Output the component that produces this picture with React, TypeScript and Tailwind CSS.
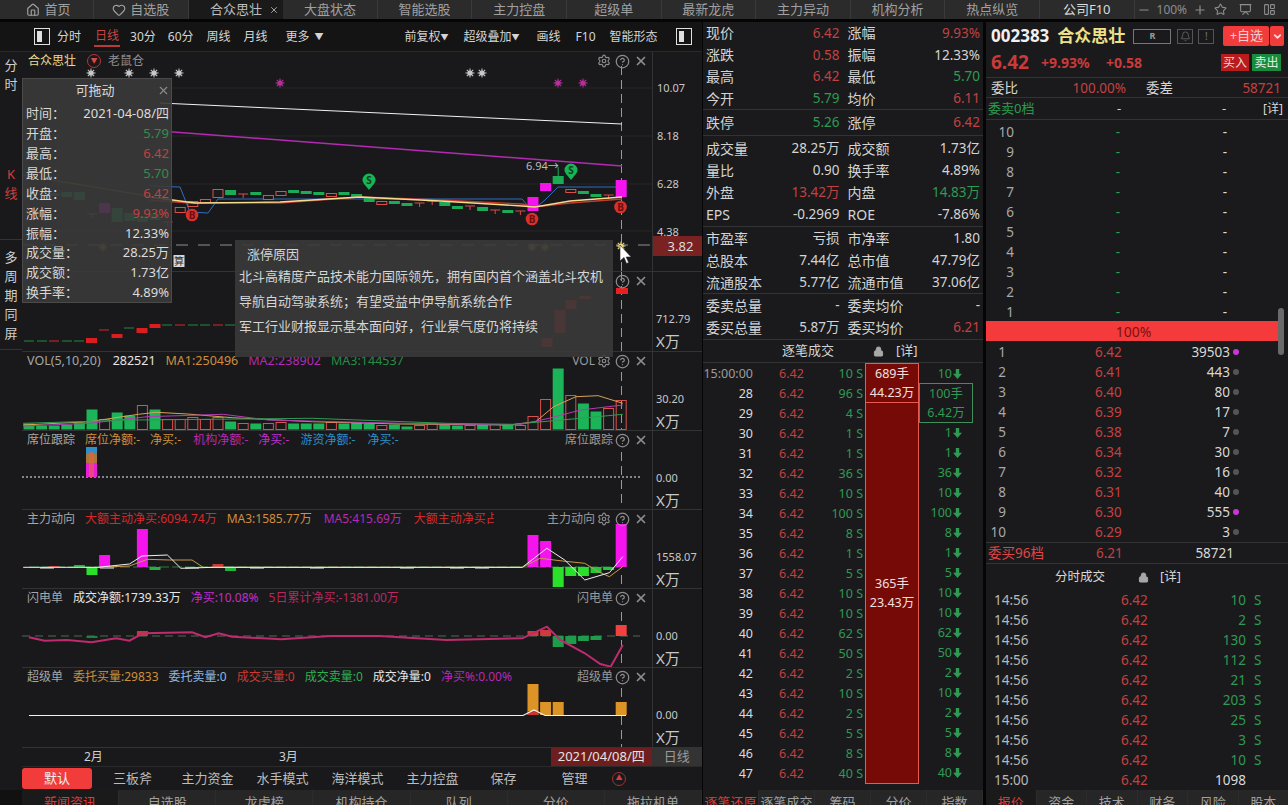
import { ReactNode } from "react";
import {
  ChevronDown,
  CircleHelp,
  Heart,
  Home,
  LayoutPanelLeft,
  Lock,
  Minus,
  Plus,
  Presentation,
  Settings,
  Star,
  X,
  Bell,
} from "lucide-react";

const RED = "text-[#c24141]";
const GREEN = "text-[#2e9a52]";
const CX = (i: number) => 29 + 12.6 * i;

// points read off the 2.24x / 3x crops, converted to page pixels
function line(points: number[][], yBase: number) {
  return points.map(([x, y]) => `${(x / 2.24).toFixed(1)},${(yBase + y / 3).toFixed(1)}`).join(" ");
}

const topTabs = ["自选股", "合众思壮", "大盘状态", "智能选股", "主力控盘", "超级单", "最新龙虎", "主力异动", "机构分析", "热点纵览", "公司F10"];

function TopBar() {
  return (
    <div className="flex h-[19px] items-center overflow-hidden bg-[#2b2b2b] text-[13px] text-[#a0a0a0]">
      <div className="flex h-full w-[94px] items-center justify-center gap-[4px] border-r border-[#3a3a3a] pl-[4px]">
        <Home size={14} />
        <span>首页</span>
      </div>
      {topTabs.map((t, i) => (
        <div
          key={t}
          className={
            i === 1
              ? "relative flex h-full w-[94.6px] items-center justify-center bg-[#1a1a1a] text-[#bdbdbd]"
              : i === 10
                ? "flex h-full w-[94.6px] items-center justify-center border-r border-[#3a3a3a] text-[#dcdcdc]"
                : "flex h-full w-[94.6px] items-center justify-center gap-[4px] border-r border-[#3a3a3a]"
          }
        >
          {i === 0 ? <Heart size={14} /> : null}
          <span>{t}</span>
          {i === 1 ? <X size={10} className="absolute right-[4px] top-[5px]" /> : null}
        </div>
      ))}
      <div className="flex flex-1 items-center gap-[6px] pl-[2px] text-[12px] text-[#8d8d8d]">
        <Minus size={14} />
        <span>100%</span>
        <Plus size={14} />
        <Star size={13} className="ml-[1px]" />
        <Presentation size={13} className="ml-[6px]" />
        <LayoutPanelLeft size={13} className="ml-[5px]" />
      </div>
    </div>
  );
}

function SplitIcon() {
  return (
    <div className="flex h-[17px] w-[16px] shrink-0 border border-[#e0e0e0] p-[2px]">
      <div className="w-[5px] bg-[#e0e0e0]" />
    </div>
  );
}

function Toolbar() {
  return (
    <div className="flex h-[30px] items-center whitespace-nowrap border-b border-[#2a2a2a] bg-[#141414] pl-[34px] text-[12px] text-[#d4d4d4]">
      <SplitIcon />
      <span className="ml-[7px]">分时</span>
      <span className="ml-[13px] border-b-2 border-[#b93a3a] px-px text-[#c94545]">日线</span>
      <span className="ml-[10px]">30分</span>
      <span className="ml-[12px]">60分</span>
      <span className="ml-[13px]">周线</span>
      <span className="ml-[13px]">月线</span>
      <span className="ml-[18px]">更多</span>
      <span className="ml-[5px] text-[9px]">▼</span>
      <span className="ml-[81px]">前复权</span>
      <span className="text-[8px]">▼</span>
      <span className="ml-[15px]">超级叠加</span>
      <span className="text-[8px]">▼</span>
      <span className="ml-[17px]">画线</span>
      <span className="ml-[15px]">F10</span>
      <span className="ml-[14px]">智能形态</span>
      <div className="ml-[18px]">
        <SplitIcon />
      </div>
    </div>
  );
}

function SideRail() {
  return (
    <div className="flex w-[22px] flex-col text-center text-[13px] leading-[19px] text-[#cfcfcf]">
      <div className="flex h-[73px] flex-col pt-[4px]">
        <span>分</span>
        <span>时</span>
      </div>
      <div className="flex h-[115px] flex-col border-b border-[#333] pt-[40px] text-[#cf3f3f]">
        <span>K</span>
        <span>线</span>
      </div>
      <div className="flex h-[110px] flex-col border-b border-[#333] pt-[8px]">
        <span>多</span>
        <span>周</span>
        <span>期</span>
        <span>同</span>
        <span>屏</span>
      </div>
    </div>
  );
}

function Burst({ x, y, color }: { x: number; y: number; color: string }) {
  const rays = [0, 45, 90, 135];
  return (
    <g>
      <circle cx={x} cy={y} r={2.6} fill={color} />
      {rays.map((r) => (
        <line key={r} x1={x - 4.5} y1={y} x2={x + 4.5} y2={y} stroke={color} strokeWidth={1} transform={`rotate(${r} ${x} ${y})`} />
      ))}
    </g>
  );
}

// [index, top, bottom, kind]: r hollow red, g green, m magenta, c cross
const candles: [number, number, number, string][] = [
  [2, 193, 196, "g"], [3, 192, 197, "g"], [4, 192, 200, "g"], [5, 214, 218, "c"], [6, 203, 213, "m"],
  [7, 208, 222, "g"], [8, 213, 221, "g"], [9, 216, 222, "g"], [10, 214, 220, "g"], [11, 222, 224, "c"],
  [12, 207, 212, "r"], [13, 201, 206, "r"], [14, 199, 202, "r"], [15, 189, 197, "r"], [16, 190, 195, "g"],
  [17, 194, 194, "c"], [18, 192, 195, "g"], [19, 195, 199, "r"], [20, 191, 195, "r"], [21, 190, 193, "g"],
  [22, 191, 194, "g"], [23, 192, 195, "g"], [24, 193, 196, "r"], [25, 192, 195, "g"], [26, 194, 197, "g"],
  [27, 197, 202, "g"], [28, 201, 204, "r"], [29, 201, 204, "g"], [30, 203, 206, "g"], [31, 203, 203, "c"],
  [32, 201, 201, "c"], [33, 202, 206, "g"], [34, 206, 209, "g"], [35, 206, 206, "c"], [36, 207, 211, "g"],
  [37, 210, 210, "c"], [38, 210, 213, "g"], [39, 211, 211, "c"], [40, 197, 211, "m"], [41, 183, 191, "m"],
  [42, 176, 184, "g"], [43, 189, 192, "r"], [44, 191, 194, "g"], [45, 194, 197, "g"], [46, 195, 195, "c"],
  [47, 180, 197, "m"],
];

function Candle({ c }: { c: [number, number, number, string] }) {
  const [i, top, bot, kind] = c;
  const x = CX(i);
  if (kind === "c") {
    return (
      <g stroke="#d8504a">
        <line x1={x - 5} x2={x + 5} y1={top} y2={top} />
        <line x1={x} x2={x} y1={top} y2={top + 4} />
      </g>
    );
  }
  if (kind === "r") {
    return <rect x={x - 5} y={top + 0.5} width={10} height={bot - top} fill="#191a1c" stroke="#dc4f48" />;
  }
  return <rect x={x - 5.5} y={top} width={11} height={bot - top} fill={kind === "m" ? "#f614ee" : "#1bab57"} />;
}

function Sign({ x, y, letter }: { x: number; y: number; letter: string }) {
  const green = letter === "S";
  return (
    <g>
      {green ? (
        <path d={`M${x - 6.5} ${y}a6.5 6.5 0 0 1 13 0c0 3-3.5 6-6.5 10c-3-4-6.5-7-6.5-10z`} fill="#18b455" />
      ) : (
        <circle cx={x} cy={y} r={6.3} fill="#d8302c" />
      )}
      <text x={x} y={y + 3.5} textAnchor="middle" fontSize={10} fontWeight={700} fill={green ? "#0d3d20" : "#6e0d0d"}>
        {letter}
      </text>
    </g>
  );
}

function CursorLine({ top, bottom }: { top: number; bottom: number }) {
  return <line x1={621.5} x2={621.5} y1={top} y2={bottom} stroke="#9a9a9a" strokeDasharray="9 5" />;
}

function KChart() {
  return (
    <svg className="absolute inset-0 h-full w-full" viewBox="22 52 630 219">
      <g stroke="#272727">
        <line x1={22} x2={652} y1={88} y2={88} />
        <line x1={22} x2={652} y1={136} y2={136} />
        <line x1={22} x2={652} y1={184} y2={184} />
        <line x1={22} x2={652} y1={231} y2={231} />
      </g>
      <line x1={22} x2={652} y1={245} y2={245} stroke="#8f8f8f" strokeDasharray="12 10" />
      <CursorLine top={66} bottom={272} />
      {[91, 129, 154, 179, 470, 482].map((x) => (
        <Burst key={x} x={x} y={73} color="#c8c8c8" />
      ))}
      {[280, 558, 583].map((x) => (
        <Burst key={x} x={x} y={83} color="#b92f9c" />
      ))}
      {[103, 532, 545].map((x) => (
        <Burst key={x} x={x} y={247} color="#a5813a" />
      ))}
      <polyline points="160,103 622,124" fill="none" stroke="#f2f2f2" />
      <polyline points="160,131 622,166" fill="none" stroke="#b42ab4" strokeWidth={1.5} />
      <polyline points="22,175 172,200" fill="none" stroke="#a8702a" />
      <polyline
        points="150,186 180,187 190,212 208,213 218,199 522,199 532,211 545,200 558,187 622,187"
        fill="none"
        stroke="#2f6fc4"
      />
      {candles.map((c) => (
        <Candle key={c[0]} c={c} />
      ))}
      <line x1={CX(42)} x2={CX(42)} y1={167} y2={176} stroke="#1bab57" />
      <polyline
        points="150,200 190,203 280,203 360,197 440,200 522,204 535,207 570,203 622,199"
        fill="none"
        stroke="#c43a30"
        strokeWidth={1.3}
      />
      <polyline
        points="150,197 195,203 280,202 360,197 440,201 522,206 535,207 570,201 622,197"
        fill="none"
        stroke="#f3dd8c"
        strokeWidth={1.3}
      />
      <Sign x={192} y={215} letter="B" />
      <Sign x={532} y={219} letter="B" />
      <Sign x={620.5} y={207} letter="B" />
      <Sign x={369} y={180} letter="S" />
      <Sign x={571} y={170} letter="S" />
      <text x={526} y={170} fontSize={11} fill="#bdbdbd">
        6.94→
      </text>
      <rect x={173.5} y={255} width={11} height={12} fill="#d8d8d8" />
      <text x={179} y={265} textAnchor="middle" fontSize={10} fill="#333">
        算
      </text>
      <Burst x={621} y={246} color="#ecd97a" />
      <path d="M620 245v16l4-3.5 2.5 6 2.2-1-2.5-5.5h5z" fill="#fff" stroke="#222" strokeWidth={0.6} />
    </svg>
  );
}

function SecondChart() {
  const reds = [
    [91.5, 338, 343], [117, 334, 338], [142, 328, 333], [155, 324, 328], [547, 338, 347],
    [560, 310, 333], [571, 300, 309], [585, 296, 299],
  ];
  const dashes = [29, 42, 54, 67, 79, 104, 129, 167, 180, 193, 205, 218, 230];
  return (
    <svg className="absolute inset-0 h-full w-full" viewBox="22 272 630 79">
      <CursorLine top={272} bottom={352} />
      {dashes.map((x, i) => (
        <line
          key={x}
          x1={x - 5}
          x2={x + 5}
          y1={x < 90 ? 341 : x < 160 ? 340 - i * 2 : 325}
          y2={x < 90 ? 341 : x < 160 ? 340 - i * 2 : 325}
          stroke={i % 3 === 2 ? "#cf2a2a" : "#1d8a44"}
        />
      ))}
      {reds.map(([x, a, b]) => (
        <rect key={x} x={x - 5.5} y={a} width={11} height={b - a} fill="#d81e1e" />
      ))}
      <rect x={616} y={288} width={12} height={6} fill="#e8201f" />
    </svg>
  );
}

const vols: [number, string][] = [
  [6, "g"], [4, "g"], [4, "g"], [5, "g"], [7, "g"], [20, "g"], [10, "r"], [17, "g"], [14, "g"], [24, "r"],
  [20, "g"], [10, "r"], [10, "r"], [12, "r"], [10, "r"], [12, "r"], [8, "g"], [6, "r"], [6, "g"], [6, "r"],
  [7, "r"], [6, "g"], [6, "g"], [6, "g"], [7, "r"], [6, "g"], [7, "g"], [6, "g"], [4, "r"], [5, "g"],
  [3, "g"], [4, "r"], [6, "r"], [5, "g"], [4, "g"], [4, "r"], [5, "g"], [5, "r"], [5, "g"], [4, "r"],
  [13, "r"], [30, "r"], [61, "g"], [34, "r"], [26, "g"], [18, "g"], [21, "r"], [29, "r"],
];

function VolChart() {
  return (
    <svg className="absolute inset-0 h-full w-full" viewBox="22 352 630 78">
      <CursorLine top={372} bottom={431} />
      {vols.map(([h, k], i) =>
        k === "g" ? (
          <rect key={i} x={CX(i) - 5.5} y={429.5 - h} width={11} height={h} fill="#1bb458" />
        ) : (
          <rect key={i} x={CX(i) - 5} y={429.5 - h} width={10} height={h} fill="none" stroke="#d9504c" />
        ),
      )}
      <polyline
        points={line([[52, 585], [200, 575], [310, 553], [350, 547], [420, 552], [520, 563], [700, 575], [900, 582], [1140, 585], [1200, 575], [1240, 530], [1290, 500], [1340, 497], [1395, 520]], 230)}
        fill="none"
        stroke="#d6a354"
      />
      <polyline
        points={line([[52, 588], [200, 580], [330, 560], [500, 553], [600, 570], [900, 580], [1160, 585], [1230, 565], [1300, 540], [1395, 525]], 230)}
        fill="none"
        stroke="#b53ab5"
      />
      <polyline
        points={line([[52, 580], [300, 570], [700, 565], [1000, 580], [1150, 583], [1300, 565], [1395, 553]], 230)}
        fill="none"
        stroke="#2f9c50"
      />
    </svg>
  );
}

function SeatChart() {
  return (
    <svg className="absolute inset-0 h-full w-full" viewBox="22 431 630 78">
      <CursorLine top={452} bottom={505} />
      <line x1={22} x2={640} y1={477} y2={477} stroke="#f2f2f2" strokeDasharray="2 2" />
      <rect x={86} y={447} width={11} height={7} fill="#2f8fc8" />
      <rect x={86} y={454} width={11} height={9} fill="#a9773b" />
      <rect x={86} y={463} width={11} height={14} fill="#e81fd8" />
      <rect x={89} y={452} width={5} height={25} fill="#f0603a" opacity={0.6} />
    </svg>
  );
}

function MainForceChart() {
  const bars: [number, number, number, string][] = [
    [6, 555, 567, "#f614ee"], [9, 529, 567, "#f614ee"], [40, 535, 567, "#f614ee"], [41, 541, 567, "#f614ee"], [47, 524, 567, "#f614ee"],
    [5, 567, 575, "#2ae02a"], [10, 567, 570, "#22b13e"], [16, 567, 571, "#22b13e"],
    [42, 567, 587, "#2ae02a"], [43, 567, 576, "#2ae02a"], [44, 567, 576, "#2ae02a"], [45, 567, 573, "#22c83a"], [46, 567, 570, "#22c83a"],
    [4, 565, 567, "#22b13e"], [15, 564, 567, "#c93a32"], [2, 566, 567, "#c93a32"],
  ];
  return (
    <svg className="absolute inset-0 h-full w-full" viewBox="22 510 630 78">
      <CursorLine top={575} bottom={589} />
      <line x1={29} x2={622} y1={567} y2={567} stroke="#26803c" strokeDasharray="10 3" />
      {[40, 100, 185, 250, 310, 400, 450, 475].map((x) => (
        <line key={x} x1={x} x2={x + 14} y1={568} y2={568} stroke="#eee" />
      ))}
      {bars.map(([i, a, b, color]) => (
        <rect key={`${i}${a}`} x={CX(i) - 5.5} y={a} width={11} height={b - a} fill={color} />
      ))}
      <polyline
        points={line([[220, 172], [290, 168], [330, 148], [380, 150], [430, 150], [455, 172], [1170, 172], [1210, 145], [1260, 153], [1310, 160], [1340, 185], [1365, 200], [1395, 170]], 510)}
        fill="none"
        stroke="#c69a4a"
      />
      <polyline
        points={line([[52, 172], [220, 172], [290, 162], [318, 138], [375, 135], [405, 175], [480, 172], [1170, 172], [1225, 115], [1265, 150], [1310, 210], [1365, 188], [1395, 140]], 510)}
        fill="none"
        stroke="#f0f0f0"
      />
    </svg>
  );
}

function LightningChart() {
  const bars: [number, number, number, string][] = [
    [9, 631, 636, "#c23a38"], [40, 631, 636, "#cf3b3a"], [41, 630, 636, "#cf3b3a"], [47, 625, 636, "#f24141"],
    [5, 636, 638, "#237f3d"], [42, 636, 647, "#1f9b4c"], [43, 636, 644, "#1f9b4c"], [44, 636, 641, "#1f9b4c"], [45, 636, 640, "#1f9b4c"],
  ];
  return (
    <svg className="absolute inset-0 h-full w-full" viewBox="22 589 630 78">
      <CursorLine top={612} bottom={668} />
      <line x1={22} x2={640} y1={636} y2={636} stroke="#4f6a54" strokeDasharray="8 5" />
      {bars.map(([i, a, b, color]) => (
        <rect key={`${i}`} x={CX(i) - 5.5} y={a} width={11} height={b - a} fill={color} />
      ))}
      <polyline
        points={line([[65, 382], [100, 392], [150, 390], [205, 397], [260, 385], [290, 392], [320, 370], [430, 367], [460, 382], [490, 370], [520, 380], [630, 388], [740, 378], [850, 378], [1000, 390], [1170, 385], [1225, 350], [1255, 390], [1310, 430], [1345, 462], [1368, 470], [1395, 405]], 510)}
        fill="none"
        stroke="#c02a6e"
        strokeWidth={2}
      />
    </svg>
  );
}

function SuperChart() {
  return (
    <svg className="absolute inset-0 h-full w-full" viewBox="22 668 630 79">
      <CursorLine top={688} bottom={748} />
      {[[40, 684], [41, 702], [42, 702], [47, 702]].map(([i, top]) => (
        <rect key={i} x={CX(i) - 5.5} y={top} width={11} height={715 - top} fill="#dd9427" />
      ))}
      <rect x={CX(40) - 5} y={711} width={10} height={4} fill="#c8362e" />
      <polyline points="29,715.5 523,715.5 534,710 545,715.5 626,715.5" fill="none" stroke="#f2f2f2" strokeWidth={1.2} />
    </svg>
  );
}

function PanelIcons({ gear = true }: { gear?: boolean }) {
  return (
    <div className="flex items-center gap-[4px] text-[#8c8c8c]">
      {gear ? <Settings size={14} /> : null}
      <CircleHelp size={15} />
      <X size={14} strokeWidth={3} />
    </div>
  );
}

function Panel({
  height,
  chart,
  labels,
  right,
  gear = true,
  value,
}: {
  height: string;
  chart: ReactNode;
  labels?: ReactNode;
  right?: string;
  gear?: boolean;
  value: string;
}) {
  return (
    <div className={`flex ${height} border-b border-[#333]`}>
      <div className="relative flex-1 overflow-hidden">
        {chart}
        <div className="relative flex h-[18px] items-center justify-between pl-[5px] pr-[4px] text-[12px] whitespace-nowrap">
          <div className="flex w-[490px] gap-[10px] overflow-hidden">{labels}</div>
          <div className="flex items-center gap-[2px] text-[#9a9a9a]">
            <span>{right}</span>
            <PanelIcons gear={gear} />
          </div>
        </div>
      </div>
      <div className="flex w-[50px] flex-col border-l border-[#333] pl-[3px] pt-[39px] text-[#c8c8c8]">
        <span className="text-[11px] leading-4">{value}</span>
        <span className="mt-[4px] text-[15px] leading-5">X万</span>
      </div>
    </div>
  );
}

function KPanel() {
  return (
    <div className="flex h-[220px] border-b border-[#333]">
      <div className="relative flex-1 overflow-hidden">
        <KChart />
        <div className="relative flex h-[18px] items-center justify-between pl-[6px] pr-[4px] text-[12px]">
          <div className="flex items-center">
            <span className="text-[#ecdc8c]">合众思壮</span>
            <span className="ml-[11px] flex h-[14px] w-[14px] items-center justify-center rounded-full border border-[#b43a3a] text-[7px] text-[#d24a4a]">▼</span>
            <span className="ml-[7px] text-[#8f8f8f]">老鼠仓</span>
          </div>
          <PanelIcons />
        </div>
      </div>
      <div className="relative flex w-[50px] flex-col border-l border-[#333] pl-[4px] pt-[28px] text-[11px] leading-[48px] text-[#c8c8c8]">
        <span className="h-[48px] leading-4">10.07</span>
        <span className="h-[48px] leading-4">8.18</span>
        <span className="h-[48px] leading-4">6.28</span>
        <span className="h-[16px] leading-4">4.38</span>
        <div className="absolute left-0 top-[184px] flex h-[20px] w-full items-center justify-center bg-[#7a2222] pl-[6px] text-[13px] text-[#dcdcdc]">3.82</div>
      </div>
    </div>
  );
}

const popRows: [string, string, string][] = [
  ["时间：", "2021-04-08/四", "text-[#dcdcdc]"],
  ["开盘：", "5.79", "text-[#2f8f4e]"],
  ["最高：", "6.42", "text-[#c24141]"],
  ["最低：", "5.70", "text-[#2f8f4e]"],
  ["收盘：", "6.42", "text-[#c24141]"],
  ["涨幅：", "9.93%", "text-[#c24141]"],
  ["振幅：", "12.33%", "text-[#dcdcdc]"],
  ["成交量：", "28.25万", "text-[#dcdcdc]"],
  ["成交额：", "1.73亿", "text-[#dcdcdc]"],
  ["换手率：", "4.89%", "text-[#dcdcdc]"],
];

function DragPopup() {
  return (
    <div className="absolute left-0 top-[26px] h-[225px] w-[150px] border border-[#4a4a4a] bg-[#3a3a3a]/90 text-[13px] text-[#d8d8d8]">
      <div className="relative flex h-[24px] items-center justify-center pr-[4px]">
        <span>可拖动</span>
        <X size={13} className="absolute right-[1px] top-[5px] text-[#8c8c8c]" />
      </div>
      <div className="flex flex-col pl-[3px] pr-[2px] pt-[1px]">
        {popRows.map(([k, v, c]) => (
          <div key={k} className="flex h-[19.9px] items-center justify-between">
            <span>{k}</span>
            <span className={c}>{v}</span>
          </div>
        ))}
      </div>
    </div>
  );
}

function ReasonTip() {
  return (
    <div className="absolute left-[213px] top-[188px] h-[117px] w-[378px] bg-[#3a3a3a]/90 pl-[4px] text-[13px] text-[#d6d6d6]">
      <div className="pl-[8px] pt-[5px] leading-[18px]">涨停原因</div>
      <div className="mt-[1px] whitespace-nowrap leading-[25px]">北斗高精度产品技术能力国际领先，拥有国内首个涵盖北斗农机</div>
      <div className="whitespace-nowrap leading-[25px]">导航自动驾驶系统；有望受益中伊导航系统合作</div>
      <div className="whitespace-nowrap leading-[25px]">军工行业财报显示基本面向好，行业景气度仍将持续</div>
    </div>
  );
}

function ChartColumn() {
  return (
    <div className="flex w-[680px] flex-col">
      <div className="relative">
        <KPanel />
        <Panel height="h-[80px]" chart={<SecondChart />} gear={false} value="712.79" />
        <Panel
          height="h-[79px]"
          chart={<VolChart />}
          right="VOL"
          value="30.20"
          labels={
            <>
              <span className="text-[12.5px] text-[#a6a6a6]">VOL(5,10,20)</span>
              <span className="ml-[2px] text-[12.5px] text-[#e6e6e6]">282521</span>
              <span className="text-[12.5px] text-[#cf8f3c]">MA1:250496</span>
              <span className="text-[12.5px] text-[#b42ab4]">MA2:238902</span>
              <span className="text-[12.5px] text-[#228f45]">MA3:144537</span>
            </>
          }
        />
        <Panel
          height="h-[79px]"
          chart={<SeatChart />}
          right="席位跟踪"
          gear={false}
          value="0.00"
          labels={
            <>
              <span className="text-[#a6a6a6]">席位跟踪</span>
              <span className="text-[#cf8f3c]">席位净额:-</span>
              <span className="text-[#cf8f3c]">净买:-</span>
              <span className="ml-[2px] text-[#b42ab4]">机构净额:-</span>
              <span className="text-[#c02ed0]">净买:-</span>
              <span className="ml-[1px] text-[#2f8fc8]">游资净额:-</span>
              <span className="ml-[2px] text-[#2f8fc8]">净买:-</span>
            </>
          }
        />
        <Panel
          height="h-[79px]"
          chart={<MainForceChart />}
          right="主力动向"
          value="1558.07"
          labels={
            <>
              <span className="text-[#a6a6a6]">主力动向</span>
              <span className="text-[#d62a2a]">大额主动净买:6094.74万</span>
              <span className="text-[#cf8f3c]">MA3:1585.77万</span>
              <span className="ml-[2px] text-[#b42ab4]">MA5:415.69万</span>
              <span className="ml-[2px] w-[80px] shrink-0 overflow-hidden text-[#d62a2a]">大额主动净买占比</span>
            </>
          }
        />
        <Panel
          height="h-[79px]"
          chart={<LightningChart />}
          right="闪电单"
          gear={false}
          value="0.00"
          labels={
            <>
              <span className="text-[#a6a6a6]">闪电单</span>
              <span className="text-[#e6e6e6]">成交净额:1739.33万</span>
              <span className="text-[#c02ed0]">净买:10.08%</span>
              <span className="text-[#b82a5c]">5日累计净买:-1381.00万</span>
            </>
          }
        />
        <Panel
          height="h-[80px]"
          chart={<SuperChart />}
          right="超级单"
          gear={false}
          value="0.00"
          labels={
            <>
              <span className="text-[#a6a6a6]">超级单</span>
              <span className="text-[#cf8f3c]">委托买量:29833</span>
              <span className="text-[#8fb8e0]">委托卖量:0</span>
              <span className="text-[#c93a32]">成交买量:0</span>
              <span className="text-[#2fae52]">成交卖量:0</span>
              <span className="text-[#e6e6e6]">成交净量:0</span>
              <span className="text-[#b42ab4]">净买%:0.00%</span>
            </>
          }
        />
        <DragPopup />
        <ReasonTip />
      </div>
      <div className="flex h-[18px] items-center text-[12px] text-[#d0d0d0]">
        <span className="ml-[62px]">2月</span>
        <span className="ml-[176px]">3月</span>
        <div className="ml-[253px] flex h-full w-[101px] items-center justify-center bg-[#6e1e1e] text-[13px] text-[#e4e4e4]">2021/04/08/四</div>
        <div className="flex h-full flex-1 items-center justify-center bg-[#333] text-[13px] text-[#9a9a9a]">日线</div>
      </div>
      <div className="flex h-[24px] items-center border-t border-[#2a2a2a] text-[13px] text-[#bcbcbc]">
        <div className="flex h-[21px] w-[70px] items-center justify-center rounded-[3px] bg-[#f23c3c] text-[#f0f0f0]">默认</div>
        <span className="ml-[3px] flex w-[75px] justify-center">三板斧</span>
        <span className="flex w-[75px] justify-center">主力资金</span>
        <span className="flex w-[75px] justify-center">水手模式</span>
        <span className="flex w-[75px] justify-center">海洋模式</span>
        <span className="flex w-[75px] justify-center">主力控盘</span>
        <span className="flex w-[67px] justify-center">保存</span>
        <span className="flex w-[75px] justify-center">管理</span>
        <span className="flex h-[14px] w-[14px] items-center justify-center rounded-full border border-[#a03434] text-[7px] text-[#d04040]">▲</span>
      </div>
    </div>
  );
}

const quoteGroups: { h: string; rows: [string, string, string, string, string, string][] }[] = [
  {
    h: "h-[88px]",
    rows: [
      ["现价", "6.42", RED, "涨幅", "9.93%", RED],
      ["涨跌", "0.58", RED, "振幅", "12.33%", ""],
      ["最高", "6.42", RED, "最低", "5.70", GREEN],
      ["今开", "5.79", GREEN, "均价", "6.11", RED],
    ],
  },
  { h: "h-[26px]", rows: [["跌停", "5.26", GREEN, "涨停", "6.42", RED]] },
  {
    h: "h-[91px]",
    rows: [
      ["成交量", "28.25万", "", "成交额", "1.73亿", ""],
      ["量比", "0.90", "", "换手率", "4.89%", ""],
      ["外盘", "13.42万", RED, "内盘", "14.83万", GREEN],
      ["EPS", "-0.2969", "", "ROE", "-7.86%", ""],
    ],
  },
  {
    h: "h-[67px]",
    rows: [
      ["市盈率", "亏损", "", "市净率", "1.80", ""],
      ["总股本", "7.44亿", "", "总市值", "47.79亿", ""],
      ["流通股本", "5.77亿", "", "流通市值", "37.06亿", ""],
    ],
  },
  {
    h: "h-[46px]",
    rows: [
      ["委卖总量", "-", "", "委卖均价", "-", ""],
      ["委买总量", "5.87万", "", "委买均价", "6.21", RED],
    ],
  },
];

const tickVols = ["10", "96", "4", "1", "1", "36", "10", "100", "8", "1", "5", "10", "10", "62", "50", "2", "10", "2", "5", "8", "40"];

function BottomTabs({ tabs, width }: { tabs: string[]; width: string }) {
  return (
    <div className="flex h-[15px] overflow-hidden bg-[#111] text-[13px] text-[#a0a0a0]">
      {tabs.map((t, i) => (
        <div
          key={t}
          className={`${width} flex justify-center border-r border-[#2c2c2c] pt-[3px] leading-[18px] ${i === 0 ? "bg-[#1a1a1a] text-[#d93c3c]" : "bg-[#262626]"}`}
        >
          {t}
        </div>
      ))}
    </div>
  );
}

function DownArrow() {
  return (
    <svg width="9" height="10" viewBox="0 0 9 10" className="ml-px">
      <path d="M2.8 0h3.4v4.8H9L4.5 10 0 4.8h2.8z" fill="#2e9a52" />
    </svg>
  );
}

function QuoteColumn() {
  return (
    <div className="flex w-[282px] flex-col border-x border-[#050505] text-[#d4d4d4]">
      {quoteGroups.map((g) => (
        <div key={g.h} className={`flex ${g.h} flex-col justify-center border-b border-[#333] px-[3px]`}>
          {g.rows.map(([a, b, bc, c, d, dc]) => (
            <div key={a} className="flex h-[22px] items-center text-[14px]">
              <span className="w-[66px]">{a}</span>
              <span className={`w-[69px] text-right text-[13.5px] ${bc}`}>{b}</span>
              <span className="ml-[8px] w-[68px]">{c}</span>
              <span className={`w-[66px] text-right text-[13.5px] ${dc}`}>{d}</span>
            </div>
          ))}
        </div>
      ))}
      <div className="flex h-[23px] items-center border-b border-[#333] text-[13px]">
        <span className="ml-[79px]">逐笔成交</span>
        <Lock size={11} fill="#a8a8a8" className="ml-[39px] text-[#a8a8a8]" />
        <span className="ml-[12px]">[详]</span>
      </div>
      <div className="flex h-[421px] text-[12.5px] leading-[20px]">
        <div className="flex w-[162px] flex-col pt-[1px]">
          {tickVols.map((v, i) => (
            <div key={i} className="flex h-[20px]">
              <span className={`w-[50px] text-right ${i === 0 ? "text-[#9c9c9c]" : "text-[#dcdcdc]"}`}>{i === 0 ? "15:00:00" : 27 + i}</span>
              <span className={`ml-[26px] w-[26px] ${RED}`}>6.42</span>
              <span className={`w-[58px] text-right ${GREEN}`}>{v} S</span>
            </div>
          ))}
        </div>
        <div className="flex w-[54px] flex-col border border-[#e65a50] bg-[#760a06] text-center leading-[19px] text-[#f0e0e0]">
          <div className="flex h-[39px] flex-col justify-center border-b border-[#e65a50]">
            <span>689手</span>
            <span>44.23万</span>
          </div>
          <div className="flex flex-1 flex-col justify-center">
            <span>365手</span>
            <span>23.43万</span>
          </div>
        </div>
        <div className={`flex flex-1 flex-col pt-[1px] ${GREEN}`}>
          <div className="flex h-[19px] items-center justify-end pr-[21px]">
            10
            <DownArrow />
          </div>
          <div className="flex h-[40px] w-[54px] flex-col items-center justify-center border border-[#3f8f5a] leading-[19px]">
            <span>100手</span>
            <span>6.42万</span>
          </div>
          {tickVols.slice(3).map((v, i) => (
            <div key={i} className="flex h-[20px] items-center justify-end pr-[21px]">
              {v}
              <DownArrow />
            </div>
          ))}
        </div>
      </div>
      <div className="mt-auto">
        <BottomTabs tabs={["逐笔还原", "逐笔成交", "筹码", "分价", "指数"]} width="w-[56px]" />
      </div>
    </div>
  );
}

const bids: [string, string, string][] = [
  ["6.42", "39503", "#c936d8"], ["6.41", "443", "#555"], ["6.40", "80", "#555"], ["6.39", "17", "#555"], ["6.38", "7", "#555"],
  ["6.34", "30", "#555"], ["6.32", "16", "#555"], ["6.31", "40", "#555"], ["6.30", "555", "#c936d8"], ["6.29", "3", "#555"],
];
const timeVols = ["10", "2", "130", "112", "21", "203", "25", "3", "10"];

function OrderColumn() {
  return (
    <div className="flex flex-1 flex-col text-[#d8d8d8]">
      <div className="flex h-[28px] items-center pl-[5px] font-bold">
        <span className="text-[17px] text-[#f0f0f0]">002383</span>
        <span className="ml-[8px] text-[17px] text-[#efe08a]">合众思壮</span>
        <div className="ml-[8px] flex h-[15px] w-[38px] items-center justify-center border border-[#777] text-[9px] text-[#999]">R</div>
        <div className="ml-[6px] flex h-[15px] w-[16px] items-center justify-center border border-[#555] text-[#777]">
          <Bell size={11} strokeWidth={1.5} />
        </div>
        <div className="ml-[5px] flex h-[15px] w-[16px] items-center justify-center border border-[#555] text-[10px] font-normal text-[#777]">!</div>
        <div className="ml-[9px] flex h-[20px] w-[46px] items-center justify-center rounded-[2px] bg-[#f23c3c] text-[13px] font-normal text-[#f2d0d0]">+自选</div>
        <div className="ml-[1px] flex h-[20px] w-[14px] items-center justify-center rounded-[2px] bg-[#f23c3c] text-[#f2e0e0]">
          <ChevronDown size={11} strokeWidth={4} />
        </div>
      </div>
      <div className="flex h-[28px] items-center border-b border-[#333] pb-[2px] pl-[5px] font-bold text-[#c93a3a]">
        <span className="w-[50px] text-[19px]">6.42</span>
        <span className="w-[65px] text-[14px]">+9.93%</span>
        <span className="w-[115px] text-[14px]">+0.58</span>
        <span className="flex h-[17px] w-[28px] items-center justify-center bg-[#b81c1c] text-[12px] font-normal text-[#f0d8d8]">买入</span>
        <span className="ml-[3px] flex h-[17px] w-[29px] items-center justify-center bg-[#1a8a3e] text-[12px] font-normal text-[#e0f0e0]">卖出</span>
      </div>
      <div className="flex h-[20px] items-center border-b border-[#333] px-[5px] pt-[1px] text-[13.5px]">
        <span className="w-[50px]">委比</span>
        <span className={`w-[85px] text-right ${RED}`}>100.00%</span>
        <span className="ml-[20px] w-[40px]">委差</span>
        <span className={`flex-1 pr-[3px] text-right ${RED}`}>58721</span>
      </div>
      <div className="flex h-[22px] items-center border-b border-[#333] pl-[2px] text-[13px]">
        <span className={`w-[129px] ${GREEN}`}>委卖0档</span>
        <span className="w-[105px]">-</span>
        <span className="flex-1">-</span>
        <span className="pr-[6px] text-[12px]">[详]</span>
      </div>
      <div className="flex flex-col pt-[1px] text-[13.5px] leading-[22px]">
        {[10, 9, 8, 7, 6, 5, 4, 3, 2, 1].map((n) => (
          <div key={n} className="flex h-[20px]">
            <span className="w-[28px] text-right text-[#a8a8a8]">{n}</span>
            <span className={`w-[106px] text-right ${GREEN}`}>-</span>
            <span className="w-[107px] text-right">-</span>
          </div>
        ))}
      </div>
      <div className="flex h-[20px] w-[295px] items-center justify-center bg-[#f43a3a] text-[14px] text-[#7a1212]">100%</div>
      <div className="mt-[1px] flex flex-col text-[13.5px] leading-[20px]">
        {bids.map(([p, v, c], i) => (
          <div key={p} className="flex h-[20px] items-center">
            <span className="w-[20px] text-right text-[#a8a8a8]">{i + 1}</span>
            <span className={`ml-[89px] w-[27px] ${RED}`}>{p}</span>
            <span className="w-[108px] text-right">{v}</span>
            <span className="ml-[3px] h-[6px] w-[6px] rounded-full" style={{ backgroundColor: c }} />
          </div>
        ))}
      </div>
      <div className="flex h-[22px] items-center border-y border-[#333] pl-[2px] text-[13.5px]">
        <span className="w-[108px] text-[#e04545]">委买96档</span>
        <span className={`w-[27px] ${RED}`}>6.21</span>
        <span className="w-[111px] text-right">58721</span>
      </div>
      <div className="flex h-[26px] items-center text-[12.5px]">
        <span className="ml-[69px]">分时成交</span>
        <Lock size={11} fill="#a8a8a8" className="ml-[33px] text-[#a8a8a8]" />
        <span className="ml-[11px]">[详]</span>
      </div>
      <div className="flex flex-col text-[13.5px] leading-[20px]">
        {timeVols.map((v, i) => (
          <div key={i} className="flex h-[20px]">
            <span className="ml-[8px] w-[127px] text-[#b8b8b8]">14:56</span>
            <span className={`w-[27px] ${RED}`}>6.42</span>
            <span className={`w-[98px] text-right ${GREEN}`}>{v}</span>
            <span className={`ml-[8px] ${GREEN}`}>S</span>
          </div>
        ))}
        <div className="flex h-[20px]">
          <span className="ml-[8px] w-[127px] text-[#b8b8b8]">15:00</span>
          <span className={`w-[27px] ${RED}`}>6.42</span>
          <span className="w-[98px] text-right">1098</span>
        </div>
      </div>
      <div className="mt-auto">
        <BottomTabs tabs={["报价", "资金", "技术", "财务", "风险", "股本"]} width="w-[50.5px]" />
      </div>
      <div className="absolute right-[4px] top-[308px] h-[47px] w-[6px] rounded-full bg-[#6a6a6a]" />
    </div>
  );
}

export default function App() {
  return (
    <div className="relative flex h-[805px] w-[1288px] flex-col overflow-hidden bg-[#050505] font-['Noto_Sans','Noto_Sans_CJK_SC',sans-serif]">
      <TopBar />
      <div className="flex flex-1 pt-[3px]">
        <div className="flex w-[702px] flex-col bg-[#19191b] text-[#d0d0d0]">
          <Toolbar />
          <div className="flex flex-1">
            <SideRail />
            <ChartColumn />
          </div>
          <BottomTabs tabs={["新闻资讯", "自选股", "龙虎榜", "机构持仓", "队列", "分价", "拖拉机单"]} width="w-[100.9px] first:ml-[22px]" />
        </div>
        <div className="bg-[#1a1a1c]">
          <div className="flex h-full">
            <QuoteColumn />
          </div>
        </div>
        <div className="flex flex-1 border-l-2 border-[#050505] bg-[#1a1a1c]">
          <OrderColumn />
        </div>
      </div>
    </div>
  );
}
